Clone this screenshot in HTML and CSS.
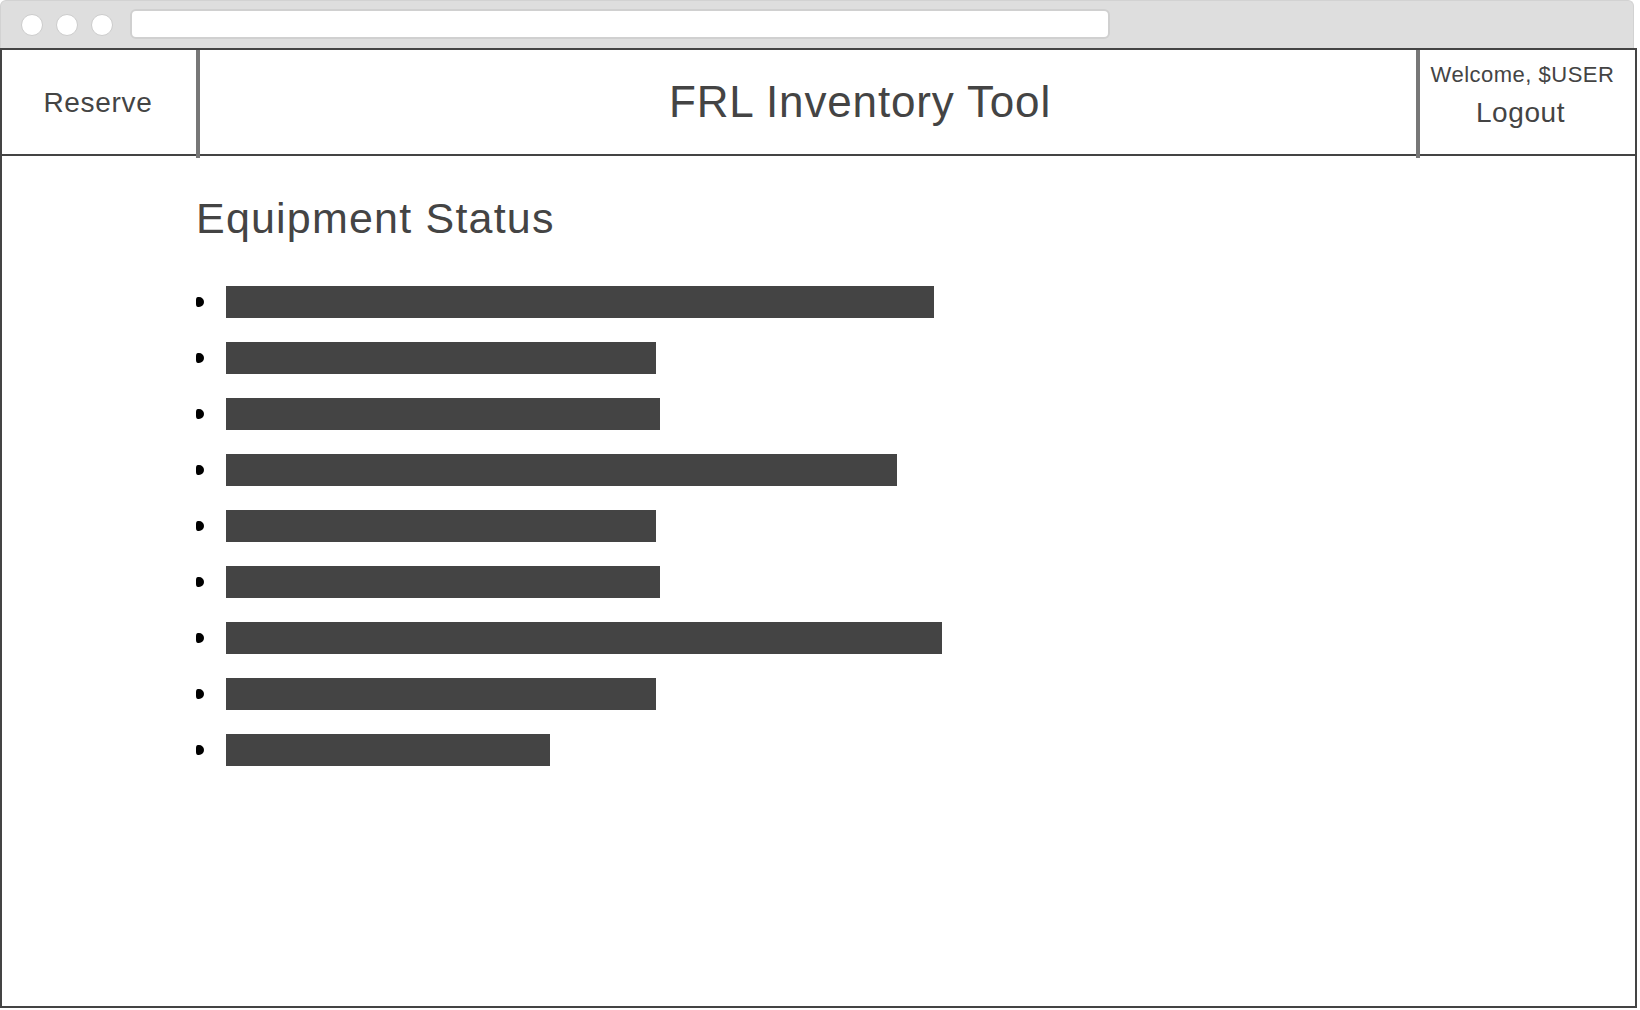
FILE: index.html
```html
<!DOCTYPE html>
<html lang="en">
<head>
<meta charset="utf-8">
<title>FRL Inventory Tool</title>
<link rel="stylesheet" href="styles.css">
</head>
<body>
<div class="window">
  <div class="chrome">
    <span class="dot-btn"></span>
    <span class="dot-btn"></span>
    <span class="dot-btn"></span>
    <div class="address"></div>
  </div>
  <div class="frame">
    <header class="header">
      <div class="cell cell-left">Reserve</div>
      <div class="divider"></div>
      <div class="cell cell-mid">FRL Inventory Tool</div>
      <div class="divider"></div>
      <div class="cell cell-right">
        <div class="welcome">Welcome, $USER</div>
        <div class="logout">Logout</div>
      </div>
    </header>
    <main class="main">
      <h1 class="title">Equipment Status</h1>
      <ul class="list">
        <li class="item"><span class="bullet"></span><span class="bar" style="width:708px"></span></li>
        <li class="item"><span class="bullet"></span><span class="bar" style="width:430px"></span></li>
        <li class="item"><span class="bullet"></span><span class="bar" style="width:434px"></span></li>
        <li class="item"><span class="bullet"></span><span class="bar" style="width:671px"></span></li>
        <li class="item"><span class="bullet"></span><span class="bar" style="width:430px"></span></li>
        <li class="item"><span class="bullet"></span><span class="bar" style="width:434px"></span></li>
        <li class="item"><span class="bullet"></span><span class="bar" style="width:716px"></span></li>
        <li class="item"><span class="bullet"></span><span class="bar" style="width:430px"></span></li>
        <li class="item"><span class="bullet"></span><span class="bar" style="width:324px"></span></li>
      </ul>
    </main>
  </div>
</div>
</body>
</html>
```

FILE: styles.css
```css
html, body {
  margin: 0;
  padding: 0;
  background: #ffffff;
}

body {
  font-family: "Liberation Sans", Arial, sans-serif;
  color: #444444;
  width: 1640px;
  height: 1010px;
  overflow: hidden;
}

.window {
  width: 1637px;
  display: flex;
  flex-direction: column;
}

.chrome {
  box-sizing: border-box;
  width: 1634px;
  height: 48px;
  background: #dedede;
  border: 1px solid #d2d2d2;
  border-bottom: none;
  border-radius: 6px 6px 0 0;
  display: flex;
  align-items: center;
  padding-left: 20px;
  padding-top: 1px;
}

.dot-btn {
  box-sizing: border-box;
  width: 22px;
  height: 22px;
  border-radius: 50%;
  background: #ffffff;
  border: 1px solid #cccccc;
  margin-right: 13px;
  flex: none;
}

.address {
  box-sizing: border-box;
  margin-left: 4px;
  width: 980px;
  height: 30px;
  background: #ffffff;
  border: 2px solid #d0d0d0;
  border-radius: 6px;
  margin-top: -2px;
}

.frame {
  box-sizing: border-box;
  height: 960px;
  border: 2px solid #444444;
  display: flex;
  flex-direction: column;
}

.header {
  height: 104px;
  border-bottom: 2px solid #444444;
  display: flex;
  flex: none;
}

.cell {
  display: flex;
  align-items: center;
  justify-content: center;
  white-space: nowrap;
}

.cell-left {
  width: 194px;
  font-size: 28px;
  letter-spacing: 0.7px;
  padding-top: 1px;
  padding-right: 2px;
  box-sizing: border-box;
}

.divider {
  width: 4px;
  height: 108px;
  background: #777777;
  flex: none;
  position: relative;
  z-index: 1;
}

.cell-mid {
  width: 1216px;
  box-sizing: border-box;
  padding-left: 104px;
  font-size: 44px;
  letter-spacing: 0.85px;
}

.cell-right {
  width: 215px;
  box-sizing: border-box;
  flex-direction: column;
  justify-content: flex-start;
  align-items: center;
  padding-top: 12px;
  padding-right: 10px;
}

.welcome {
  font-size: 22px;
  line-height: 26px;
  letter-spacing: 0.5px;
}

.logout {
  font-size: 28px;
  line-height: 32px;
  margin-top: 9px;
  margin-right: 4px;
  letter-spacing: 0.6px;
}

.main {
  padding: 41px 0 0 194px;
}

.title {
  margin: 0;
  font-size: 43px;
  line-height: 42px;
  font-weight: normal;
  letter-spacing: 1.2px;
  color: #444444;
}

.list {
  list-style: none;
  margin: 47px 0 0 0;
  padding: 0;
}

.item {
  display: flex;
  align-items: center;
  height: 32px;
  margin-bottom: 24px;
}

.bullet {
  width: 8px;
  height: 10px;
  background: #000000;
  border-radius: 2px 5px 5px 2px / 3px 5px 5px 3px;
  margin-right: 22px;
  flex: none;
}

.bar {
  height: 32px;
  background: #444444;
  display: block;
}
```
